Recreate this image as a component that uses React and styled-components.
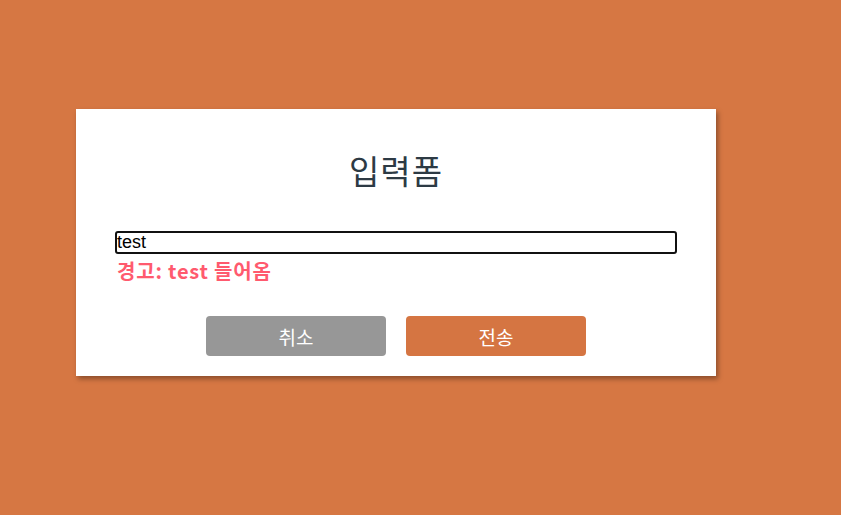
import React, { useState } from "react";
import styled, { createGlobalStyle } from "styled-components";

const GlobalStyle = createGlobalStyle`
  html, body {
    margin: 0;
    padding: 0;
    background: #d67743;
    font-family: "Noto Sans CJK KR", "Noto Sans", sans-serif;
  }
  * {
    box-sizing: border-box;
  }
`;

const Page = styled.div`
  min-height: 515px;
  padding: 109px 0 0 76px;
`;

const Card = styled.form`
  width: 640px;
  background: #ffffff;
  padding: 38px 39px 20px;
  box-shadow: 2px 3px 5px rgba(0, 0, 0, 0.35);
  display: flex;
  flex-direction: column;
`;

const Title = styled.h2`
  margin: 0 0 38px;
  text-align: center;
  font-weight: 400;
  font-size: 33px;
  line-height: 46px;
  letter-spacing: 1px;
  color: #2d3a44;
`;

const Field = styled.input`
  width: 562px;
  height: 23px;
  padding: 0;
  border: 2px solid #111;
  border-radius: 3px;
  font-family: "Liberation Sans", Arial, sans-serif;
  font-size: 18px;
  line-height: 19px;
  color: #000;
  outline: none;
`;

const Warning = styled.p`
  margin: 3px 0 0 2px;
  font-size: 20px;
  line-height: 28px;
  font-weight: 700;
  letter-spacing: 0.8px;
  color: #ff5a6e;
`;

const Actions = styled.div`
  display: flex;
  justify-content: center;
  gap: 20px;
  margin-top: 31px;
`;

const Button = styled.button`
  width: 180px;
  height: 40px;
  border: none;
  border-radius: 4px;
  background: ${(p) => (p.$primary ? "#d57542" : "#979797")};
  color: #fff;
  font-family: "Noto Sans CJK KR", sans-serif;
  font-size: 19px;
  cursor: pointer;
`;

export default function App() {
  const [value, setValue] = useState("test");
  return (
    <>
      <GlobalStyle />
      <Page>
        <Card onSubmit={(e) => e.preventDefault()}>
          <Title>입력폼</Title>
          <Field value={value} onChange={(e) => setValue(e.target.value)} />
          {value && <Warning>경고: {value} 들어옴</Warning>}
          <Actions>
            <Button type="button">취소</Button>
            <Button type="submit" $primary>
              전송
            </Button>
          </Actions>
        </Card>
      </Page>
    </>
  );
}
